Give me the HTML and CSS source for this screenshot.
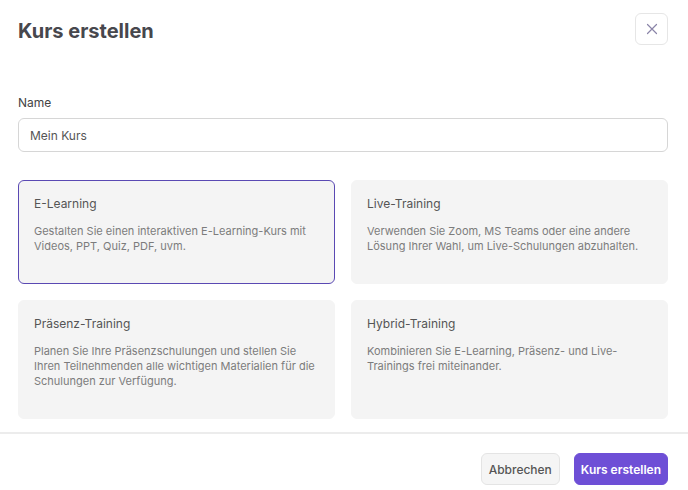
FILE: index.html
```html
<!DOCTYPE html>
<html lang="de">
<head>
    <meta charset="UTF-8">
    <meta name="viewport" content="width=device-width, initial-scale=1.0">
    <title>Kurs erstellen</title>
    <link rel="stylesheet" href="styles.css">
</head>
<body>
    <div class="modal">
        <div class="modal-header">
            <h1 class="modal-title">Kurs erstellen</h1>
            <button class="close-btn" type="button" aria-label="Schließen">
                <svg width="12" height="12" viewBox="0 0 12 12">
                    <path d="M1.5 1.5L10.5 10.5M10.5 1.5L1.5 10.5" stroke="#8a84a8" stroke-width="1.2" stroke-linecap="round"/>
                </svg>
            </button>
        </div>

        <div class="modal-body">
            <label class="field-label" for="name">Name</label>
            <input class="field-input" type="text" id="name" value="Mein Kurs">

            <div class="type-grid">
                <div class="type-card selected">
                    <div class="type-title">E-Learning</div>
                    <p class="type-desc">Gestalten Sie einen interaktiven E-Learning-Kurs mit Videos, PPT, Quiz, PDF, uvm.</p>
                </div>
                <div class="type-card">
                    <div class="type-title">Live-Training</div>
                    <p class="type-desc">Verwenden Sie Zoom, MS Teams oder eine andere Lösung Ihrer Wahl, um Live-Schulungen abzuhalten.</p>
                </div>
                <div class="type-card">
                    <div class="type-title">Präsenz-Training</div>
                    <p class="type-desc">Planen Sie Ihre Präsenzschulungen und stellen Sie Ihren Teilnehmenden alle wichtigen Materialien für die Schulungen zur Verfügung.</p>
                </div>
                <div class="type-card">
                    <div class="type-title">Hybrid-Training</div>
                    <p class="type-desc">Kombinieren Sie E-Learning, Präsenz- und Live-Trainings frei miteinander.</p>
                </div>
            </div>
        </div>

        <div class="modal-footer">
            <button class="btn btn-secondary" type="button">Abbrechen</button>
            <button class="btn btn-primary" type="button">Kurs erstellen</button>
        </div>
    </div>
</body>
</html>
```

FILE: styles.css
```css
body {
    margin: 0;
    padding: 0;
    background: #fff;
    font-family: Inter, "Noto Sans", sans-serif;
    color: #444;
}

.modal {
    width: 688px;
}

.modal-header {
    display: flex;
    align-items: center;
    justify-content: space-between;
    padding: 13px 20px 0 18px;
}

.modal-title {
    margin: 2px 0 -2px;
    font-size: 20px;
    font-weight: 700;
    color: #47474d;
}

.close-btn {
    width: 33px;
    height: 32px;
    display: flex;
    align-items: center;
    justify-content: center;
    padding: 0;
    background: #fff;
    border: 1px solid #e6e6e6;
    border-radius: 6px;
    cursor: pointer;
}

.modal-body {
    padding: 50px 20px 13px 18px;
}

.field-label {
    display: block;
    font-size: 12px;
    color: #444;
    margin-bottom: 8px;
}

.field-input {
    display: block;
    width: 100%;
    height: 34px;
    box-sizing: border-box;
    padding: 0 11px;
    font-family: inherit;
    font-size: 12px;
    color: #555;
    border: 1px solid #d6d6d6;
    border-radius: 6px;
    outline: none;
}

.type-grid {
    display: grid;
    grid-template-columns: 1fr 1fr;
    gap: 16px;
    margin-top: 28px;
}

.type-card {
    background: #f4f4f4;
    border: 1px solid #f4f4f4;
    border-radius: 6px;
    padding: 15px 15px 29px;
}

.type-card.selected {
    border-color: #5a49b3;
}

.type-title {
    font-size: 12px;
    line-height: 16px;
    color: #555;
}

.type-desc {
    margin: 12px 0 0;
    font-size: 11px;
    line-height: 15px;
    color: #7c7c7c;
}

.modal-footer {
    display: flex;
    justify-content: flex-end;
    gap: 14px;
    border-top: 2px solid #ececec;
    padding: 19px 20px 0;
}

.btn {
    height: 32px;
    font-family: inherit;
    font-size: 12px;
    border-radius: 6px;
    cursor: pointer;
}

.btn-secondary {
    padding: 0 7px;
    background: #f5f5f5;
    border: 1px solid #e4e4e4;
    color: #555;
    font-weight: 500;
}

.btn-primary {
    padding: 0 6px;
    background: #6e4fd6;
    border: 1px solid #6e4fd6;
    color: #fff;
    font-weight: 600;
}
```
